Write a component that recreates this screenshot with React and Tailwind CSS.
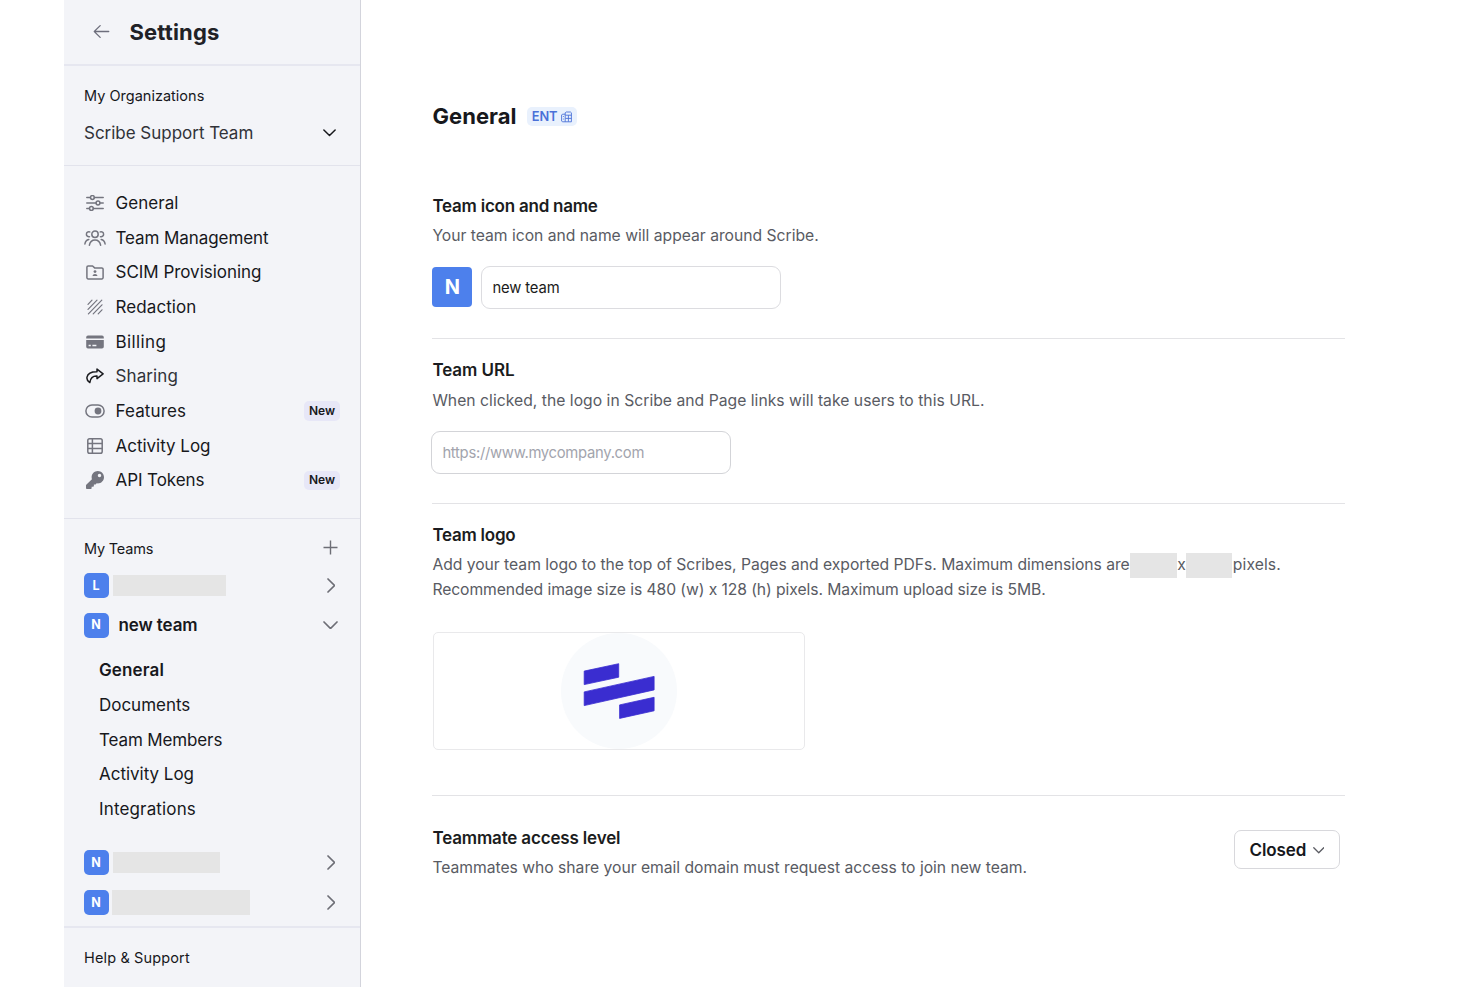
import { PiArrowLeft } from "react-icons/pi";
import { FaKey } from "react-icons/fa";

function SlidersIcon() {
  return (
    <svg viewBox="0 0 18 16" className="h-4 w-[18px]" fill="none" stroke="currentColor" strokeWidth="1.5" strokeLinecap="round">
      <path d="M.8 2.5H4.4M8.4 2.5H17.2M.8 8H10M14 8H17.2M.8 13.5H3.4M7.4 13.5H17.2" />
      <circle cx="6.4" cy="2.5" r="1.9" />
      <circle cx="12" cy="8" r="1.9" />
      <circle cx="5.4" cy="13.5" r="1.9" />
    </svg>
  );
}

function UsersIcon() {
  return (
    <svg viewBox="0 0 22 16" className="h-4 w-[22px] shrink-0" fill="none" stroke="currentColor" strokeWidth="1.5" strokeLinecap="round">
      <circle cx="11" cy="4.2" r="3.2" />
      <path d="M5.4 15.2C6 12 8.2 10 11 10S16 12 16.6 15.2" />
      <path d="M5.7 1.9A2.5 2.5 0 1 0 5.5 6.7M16.3 1.9A2.5 2.5 0 1 1 16.5 6.7" />
      <path d="M.9 14C1.2 11.6 2.6 9.8 4.8 9.4M21.1 14C20.8 11.6 19.4 9.8 17.2 9.4" />
    </svg>
  );
}

function FolderIcon() {
  return (
    <svg viewBox="0 0 18 15" className="h-[15px] w-[18px]" fill="none" stroke="currentColor" strokeWidth="1.5" strokeLinejoin="round">
      <path d="M2.2 1H6.6L8.6 2.9H15.8A1.3 1.3 0 0 1 17.1 4.2V12.6A1.3 1.3 0 0 1 15.8 13.9H2.2A1.3 1.3 0 0 1 .9 12.6V2.3A1.3 1.3 0 0 1 2.2 1Z" />
      <g fill="currentColor" stroke="none">
        <circle cx="9" cy="6.6" r="1.4" />
        <path d="M6.5 11C6.7 9.7 7.7 9 9 9S11.3 9.7 11.5 11Z" />
      </g>
    </svg>
  );
}

function HatchIcon() {
  return (
    <svg viewBox="0 0 16 16" className="size-4" fill="none" stroke="currentColor" strokeWidth="1.2" strokeLinecap="round">
      <path d="M1 5.4 5 1.2M1 10.4 10 1.2M1.4 14.8 14.8 1.2M6.2 14.8 15 5.8M11.2 14.8 15 10.8" />
    </svg>
  );
}

function CardIcon() {
  return (
    <svg viewBox="0 0 18 14" className="h-3.5 w-[18px]" fill="currentColor">
      <path d="M2 .5h14a1.8 1.8 0 0 1 1.8 1.8v1.2H.2V2.3A1.8 1.8 0 0 1 2 .5Z" />
      <path fillRule="evenodd" d="M.2 5.1h17.6v6.6a1.8 1.8 0 0 1-1.8 1.8H2a1.8 1.8 0 0 1-1.8-1.8ZM2.6 9.8v1.4h2.2V9.8ZM6.4 9.8v1.4h4V9.8Z" />
    </svg>
  );
}

function ShareIcon() {
  return (
    <svg viewBox="0 0 18 16" className="h-4 w-[18px] text-[#1b1c20]" fill="none" stroke="currentColor" strokeWidth="1.5" strokeLinejoin="round">
      <path d="M11 1.1 17.1 5.9 11 10.6V8C7.4 7.8 4.6 9.2 3.8 14.6 1.6 13.2.6 11.4 1 9.2 1.8 5.6 5.6 3.7 11 3.8Z" />
    </svg>
  );
}

function ToggleIcon() {
  return (
    <svg viewBox="0 0 20 14" className="h-3.5 w-5" fill="none">
      <rect x=".9" y=".9" width="18.2" height="12.2" rx="6.1" stroke="currentColor" strokeWidth="1.5" />
      <circle cx="13" cy="7" r="3.4" fill="currentColor" />
    </svg>
  );
}

function TableIcon() {
  return (
    <svg viewBox="0 0 16 16" className="size-4" fill="none" stroke="currentColor" strokeWidth="1.5">
      <rect x=".8" y=".8" width="14.4" height="14.4" rx="1.8" />
      <path d="M5.4 .8V15.2M.8 5.4H15.2M.8 10.4H15.2" />
    </svg>
  );
}

function BuildingIcon() {
  return (
    <svg viewBox="0 0 11 12" className="h-3 w-[11px]" fill="none" stroke="currentColor" strokeWidth=".9">
      <path d="M4.2 10.8V1.8L5.2 1h4.2l1 .8v9H1.4l-.8-.8V4l.8-.8h2.8M4.4 4.2h6M4.4 7.4h6M7.4 4.2v6.4" />
      <path d="M2.4 5v.9M2.4 7.6v.9" />
    </svg>
  );
}

function Chevron({ dir = "down", className = "" }) {
  const d = dir === "down" ? "M1 1 7.5 7.5 14 1" : "M1 1 7.5 7.5 1 14";
  return (
    <svg viewBox={dir === "down" ? "0 0 15 8.5" : "0 0 8.5 15"} className={className} fill="none" stroke="currentColor" strokeWidth="1.7" strokeLinecap="round" strokeLinejoin="round">
      <path d={d} />
    </svg>
  );
}

const nav = [
  { label: "General", icon: <SlidersIcon />, track: "tracking-[0.06px]" },
  { label: "Team Management", icon: <UsersIcon />, track: "tracking-[-0.08px]" },
  { label: "SCIM Provisioning", icon: <FolderIcon />, track: "tracking-[-0.03px]" },
  { label: "Redaction", icon: <HatchIcon />, track: "tracking-[0.09px]" },
  { label: "Billing", icon: <CardIcon />, track: "tracking-[0.4px]" },
  { label: "Sharing", icon: <ShareIcon />, track: "tracking-[0.1px] text-[#303238]" },
  { label: "Features", icon: <ToggleIcon />, track: "tracking-[0.11px]", isNew: true },
  { label: "Activity Log", icon: <TableIcon />, track: "tracking-[-0.02px]" },
  { label: "API Tokens", icon: <FaKey className="size-[18px]" />, track: "tracking-[-0.08px]", isNew: true },
];

const teamLinks = [
  { label: "General", style: "font-semibold tracking-[0.14px]" },
  { label: "Documents", style: "tracking-[-0.02px]" },
  { label: "Team Members", style: "tracking-[-0.13px]" },
  { label: "Activity Log", style: "tracking-[-0.02px]" },
  { label: "Integrations", style: "tracking-[0.15px]" },
];

function TeamBadge({ letter }) {
  return (
    <span className="flex size-[25px] shrink-0 items-center justify-center rounded-[5px] bg-[#4d80ec] pt-px text-[12.5px] font-bold text-white">
      {letter}
    </span>
  );
}

function HiddenTeam({ letter, bar }) {
  return (
    <div className="flex h-[39.5px] items-center pr-[25px] pl-[19.5px]">
      <TeamBadge letter={letter} />
      <span className={bar} />
      <Chevron dir="right" className="ml-auto h-[15px] w-[8.5px] text-[#6d6e76]" />
    </div>
  );
}

function Sidebar() {
  return (
    <aside className="flex w-[297px] shrink-0 flex-col border-r border-[#d3d4dc] bg-[#f3f4f8] text-[17px] text-[#17181c]">
      <header className="flex h-[66px] shrink-0 items-center border-b-2 border-[#e6e7f0] pl-[27px]">
        <PiArrowLeft className="-mt-px size-[21px] text-[#6d6e7c]" />
        <h1 className="ml-[17.5px] text-[22px] font-bold tracking-[0.16px] text-[#202126]">Settings</h1>
      </header>

      <section className="h-[99.5px] shrink-0 border-b border-[#e2e3ec] px-5 pt-5">
        <p className="text-[14.5px] leading-5 tracking-[0.01px]">My Organizations</p>
        <div className="mt-[15px] flex h-6 items-center justify-between pr-1 text-[#303238]">
          <span className="mt-0.5 tracking-[-0.02px]">Scribe Support Team</span>
          <Chevron className="h-[7.5px] w-[13px] text-[#17181c]" />
        </div>
      </section>

      <nav className="h-[353px] shrink-0 border-b border-[#e2e3ec] pt-5">
        {nav.map((item) => (
          <div key={item.label} className="flex h-[34.7px] items-center pr-5 pl-[19px]">
            <span className="flex w-[23px] justify-center text-[#74757f]">{item.icon}</span>
            <span className={`mt-[1.5px] ml-[9.5px] ${item.track}`}>{item.label}</span>
            {item.isNew && (
              <span className="ml-auto flex h-[19.5px] w-9 items-center justify-center rounded-[5px] bg-[#e7e7f7] text-xs font-semibold">
                New
              </span>
            )}
          </div>
        ))}
      </nav>

      <section className="flex h-[409px] shrink-0 flex-col border-b-2 border-[#e6e7f0]">
        <div className="mt-[17px] flex h-[26px] items-center justify-between pr-[22.5px] pl-5">
          <span className="text-[14.5px] tracking-[-0.2px]">My Teams</span>
          <svg viewBox="0 0 15 15" className="mb-[3px] size-[15px] text-[#6d6e76]" stroke="currentColor" strokeWidth="1.4">
            <path d="M7.5 .5V14.5M.5 7.5H14.5" />
          </svg>
        </div>
        <div className="mt-[4.3px]">
          <HiddenTeam letter="L" bar="ml-[4.5px] h-[21px] w-[113px] bg-[#e5e5e5]" />
          <div className="flex h-[39.5px] items-center pr-[22.5px] pl-[19.5px]">
            <TeamBadge letter="N" />
            <span className="mt-[1.5px] ml-[10px] font-semibold tracking-[-0.1px]">new team</span>
            <Chevron className="ml-auto h-[8.5px] w-[15px] text-[#6d6e76]" />
          </div>
        </div>
        <div className="mt-[9px] pl-[35px]">
          {teamLinks.map((link) => (
            <div key={link.label} className={`flex h-[34.7px] items-center ${link.style}`}>
              {link.label}
            </div>
          ))}
        </div>
        <div className="mt-[16px]">
          <HiddenTeam letter="N" bar="ml-[4.5px] h-[21px] w-[107px] bg-[#e5e5e5]" />
          <HiddenTeam letter="N" bar="ml-[3.5px] h-[25px] w-[138px] bg-[#e5e5e5]" />
        </div>
      </section>

      <footer className="flex h-[60px] shrink-0 items-center pl-5 text-[14.5px] tracking-[0.14px]">Help &amp; Support</footer>
    </aside>
  );
}

const descStyle = "text-[15.7px] text-[#595b63]";
const titleStyle = "flex h-6 items-center text-[17px] font-semibold text-[#1b1c20]";

function Main() {
  return (
    <main className="w-[983.5px] pl-[71.4px] whitespace-nowrap">
      <header className="mt-[101px] flex h-[30px] items-center">
        <h2 className="text-[22px] font-bold tracking-[0.06px] text-[#17181c]">General</h2>
        <span className="ml-[10.5px] flex h-[19px] w-[49.5px] items-center justify-center gap-[3.5px] rounded-[5px] bg-[#e9f1fd] pt-px text-[12.8px] font-semibold text-[#4a70d8]">
          ENT
          <BuildingIcon />
        </span>
      </header>

      <section className="mt-[63px] h-[145px] border-b border-[#e3e3e6]">
        <h3 className={`${titleStyle} pt-[2px] tracking-[-0.23px]`}>Team icon and name</h3>
        <p className={`${descStyle} mt-[5px] flex h-[25px] items-center tracking-[-0.01px]`}>
          Your team icon and name will appear around Scribe.
        </p>
        <div className="mt-[18.4px] flex items-center">
          <span className="-mt-[1.5px] flex size-10 items-center justify-center rounded-[4px] bg-[#4d80ec] text-[20px] font-bold text-white">
            N
          </span>
          <input
            className="ml-[8.5px] h-[43px] w-[300px] rounded-[9px] border-[1.5px] border-[#dcdce0] bg-white px-[10.5px] pt-px text-[14.8px] tracking-[-0.12px] text-[#1b1c20] outline-none"
            defaultValue="new team"
          />
        </div>
      </section>

      <section className="mt-[19px] h-[146px] border-b border-[#e3e3e6]">
        <h3 className={`${titleStyle} pt-[2px] tracking-[-0.08px]`}>Team URL</h3>
        <p className={`${descStyle} mt-[5px] flex h-[25px] items-center pt-[2px] tracking-[0.025px]`}>
          When clicked, the logo in Scribe and Page links will take users to this URL.
        </p>
        <input
          className="mt-[18.5px] -ml-px h-[43px] w-[300px] rounded-[9px] border-[1.5px] border-[#d3d4d8] bg-white px-[10px] pt-[2px] text-[14.8px] tracking-[-0.28px] outline-none placeholder:text-[#a2a4ad]"
          placeholder="https://www.mycompany.com"
        />
      </section>

      <section className="mt-[19px] h-[273px] border-b border-[#e3e3e6]">
        <h3 className={`${titleStyle} pt-[2px] tracking-[-0.25px]`}>Team logo</h3>
        <div className={`${descStyle} mt-[5px]`}>
          <p className="flex h-[25px] items-center">
            <span className="tracking-[-0.025px]">
              Add your team logo to the top of Scribes, Pages and exported PDFs. Maximum dimensions are
            </span>
            <span className="mt-[2px] ml-[0.5px] h-[25px] w-[47px] bg-[#e5e5e5]" />
            <span>x</span>
            <span className="mt-[2px] h-[25px] w-[46px] bg-[#e5e5e5]" />
            <span className="ml-px tracking-[0.08px]">pixels.</span>
          </p>
          <p className="flex h-[25px] items-center tracking-[-0.08px]">
            Recommended image size is 480 (w) x 128 (h) pixels. Maximum upload size is 5MB.
          </p>
        </div>
        <div className="mt-[29.5px] ml-[0.3px] flex h-[118.5px] w-[372px] items-center justify-center rounded-[5px] border-[1.5px] border-[#e9e9eb]">
          <svg viewBox="0 0 116 116" className="size-[116px]">
            <circle cx="58" cy="58" r="58" fill="#f8fafc" />
            <g fill="#3a2dd0" stroke="#3a2dd0" strokeWidth=".8" strokeLinejoin="round">
              <path d="M23.2 38.1 57.7 30.7V44.2L23.2 51.6Z" />
              <path d="M23.2 58.9 93.1 43.4V56.9L23.2 72.6Z" />
              <path d="M58.6 71.9 93.1 64.3V77.8L58.6 85.4Z" />
            </g>
          </svg>
        </div>
      </section>

      <section className="mt-[30px] flex items-start justify-between pr-[4.5px]">
        <div>
          <h3 className={`${titleStyle} pt-px tracking-[-0.16px]`}>Teammate access level</h3>
          <p className={`${descStyle} mt-[5px] flex h-[25px] items-center tracking-[-0.025px]`}>
            Teammates who share your email domain must request access to join new team.
          </p>
        </div>
        <button className="mt-[3.7px] flex h-[39.5px] w-[106px] items-center rounded-[7px] border-[1.5px] border-[#d8d8dc] pt-[2px] pl-[14.5px] text-[17px] font-semibold tracking-[-0.08px] text-[#17181c]">
          Closed
          <Chevron className="ml-[6.5px] h-[6.5px] w-[11.5px] text-[#5b5c63]" />
        </button>
      </section>
    </main>
  );
}

export default function App() {
  return (
    <div className="flex h-[987px] overflow-hidden bg-white pl-16 [font-family:Inter,sans-serif]">
      <Sidebar />
      <Main />
    </div>
  );
}
